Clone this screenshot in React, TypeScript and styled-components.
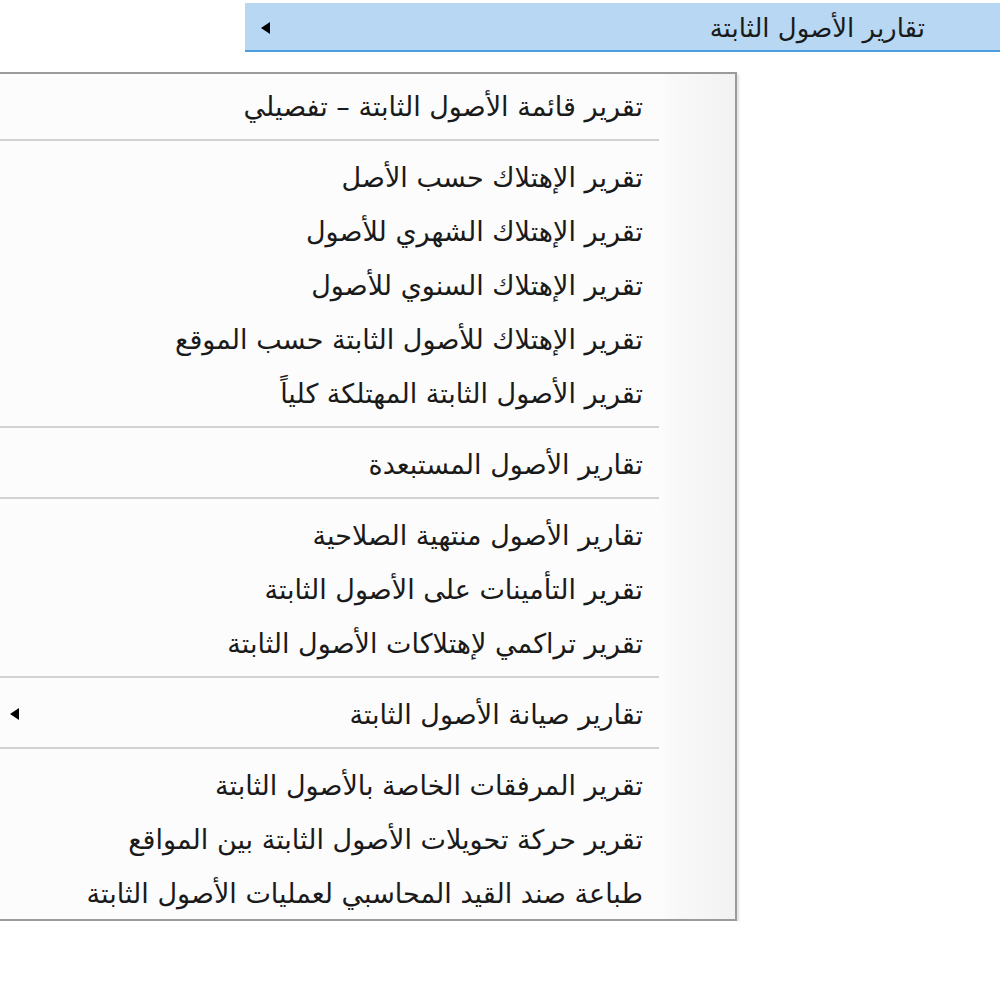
import { createGlobalStyle, styled } from "styled-components";

const GlobalStyle = createGlobalStyle`
  html, body {
    margin: 0;
    padding: 0;
    background: #ffffff;
  }
  body {
    font-family: "DejaVu Sans", "Noto Sans", sans-serif;
    color: #1a1a1a;
  }
`;

const Page = styled.div`
  display: flex;
  flex-flow: column nowrap;
  padding-top: 3px;
  width: 1000px;
`;

const ParentItem = styled.div`
  display: flex;
  flex-flow: row nowrap;
  justify-content: space-between;
  align-items: center;
  direction: rtl;
  margin-left: 245px;
  height: 49px;
  padding: 2px 75px 0 16px;
  box-sizing: border-box;
  background: #b7d7f2;
  border-bottom: 2px solid #4b9de0;
  font-size: 26px;
  line-height: 1;
`;

const SubMenu = styled.div`
  display: flex;
  flex-flow: column nowrap;
  direction: rtl;
  margin-top: 20px;
  width: 735px;
  padding: 3px 0 1px;
  border: 2px solid #9b9b9b;
  border-left: none;
  background: linear-gradient(
    to left,
    #f2f2f2 0,
    #f9f9f9 60px,
    #fcfcfc 76px,
    #fcfcfc 100%
  );
  box-shadow: 2px 2px 2px rgba(0, 0, 0, 0.12);
`;

const MenuItem = styled.div`
  display: flex;
  flex-flow: row nowrap;
  justify-content: space-between;
  align-items: center;
  box-sizing: border-box;
  height: 54px;
  padding: 4px 92px 0 10px;
  font-size: 27px;
  line-height: 1;
  white-space: nowrap;
`;

const Separator = styled.div`
  height: 17px;
  display: flex;
  align-items: center;
  margin-right: 76px;

  &::after {
    content: "";
    flex: 1;
    height: 2px;
    background: #d2d2d2;
  }
`;

const Arrow = styled.span`
  display: inline-block;
  width: 0;
  height: 0;
  border-top: 6px solid transparent;
  border-bottom: 6px solid transparent;
  border-right: 9px solid #000;
`;

type Entry = { label: string; submenu?: boolean } | "sep";

const entries: Entry[] = [
  { label: "تقرير قائمة الأصول الثابتة – تفصيلي" },
  "sep",
  { label: "تقرير الإهتلاك حسب الأصل" },
  { label: "تقرير الإهتلاك الشهري للأصول" },
  { label: "تقرير الإهتلاك السنوي للأصول" },
  { label: "تقرير الإهتلاك للأصول الثابتة حسب الموقع" },
  { label: "تقرير الأصول الثابتة المهتلكة كلياً" },
  "sep",
  { label: "تقارير الأصول المستبعدة" },
  "sep",
  { label: "تقارير الأصول منتهية الصلاحية" },
  { label: "تقرير التأمينات على الأصول الثابتة" },
  { label: "تقرير تراكمي لإهتلاكات الأصول الثابتة" },
  "sep",
  { label: "تقارير صيانة الأصول الثابتة", submenu: true },
  "sep",
  { label: "تقرير المرفقات الخاصة بالأصول الثابتة" },
  { label: "تقرير حركة تحويلات الأصول الثابتة بين المواقع" },
  { label: "طباعة صند القيد المحاسبي لعمليات الأصول الثابتة" },
];

export default function App() {
  return (
    <>
      <GlobalStyle />
      <Page>
        <ParentItem>
          <span>تقارير الأصول الثابتة</span>
          <Arrow />
        </ParentItem>
        <SubMenu>
          {entries.map((entry, index) =>
            entry === "sep" ? (
              <Separator key={`sep-${index}`} />
            ) : (
              <MenuItem key={entry.label}>
                <span>{entry.label}</span>
                {entry.submenu && <Arrow />}
              </MenuItem>
            )
          )}
        </SubMenu>
      </Page>
    </>
  );
}
